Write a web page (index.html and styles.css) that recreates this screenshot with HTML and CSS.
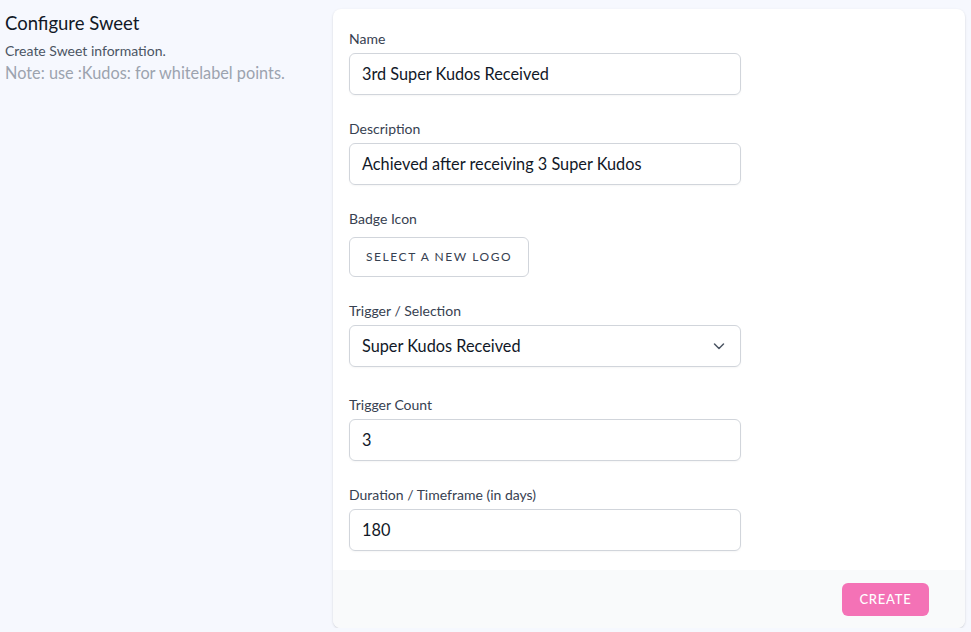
FILE: index.html
```html
<!DOCTYPE html>
<html lang="en">
<head>
<meta charset="utf-8">
<title>Configure Sweet</title>
<link rel="stylesheet" href="styles.css">
</head>
<body>
<div class="page">
  <div class="intro">
    <h3 class="intro-title">Configure Sweet</h3>
    <p class="intro-text">Create Sweet information.</p>
    <p class="intro-note">Note: use :Kudos: for whitelabel points.</p>
  </div>
  <form class="card">
    <div class="card-body">
      <div class="field">
        <label class="label">Name</label>
        <div class="input">3rd Super Kudos Received</div>
      </div>
      <div class="field">
        <label class="label">Description</label>
        <div class="input">Achieved after receiving 3 Super Kudos</div>
      </div>
      <div class="field">
        <label class="label">Badge Icon</label>
        <div class="logo-row"><span class="btn-outline">Select a new logo</span></div>
      </div>
      <div class="field field-select">
        <label class="label">Trigger / Selection</label>
        <div class="input select">
          <span>Super Kudos Received</span>
          <svg class="chevron" width="20" height="20" viewBox="0 0 20 20" fill="none"><path d="M5.5 8l4.5 4.5 4.5-4.5" stroke="#4b5563" stroke-width="1.5" stroke-linecap="round" stroke-linejoin="round"/></svg>
        </div>
      </div>
      <div class="field">
        <label class="label">Trigger Count</label>
        <div class="input">3</div>
      </div>
      <div class="field">
        <label class="label">Duration / Timeframe (in days)</label>
        <div class="input">180</div>
      </div>
    </div>
    <div class="card-footer">
      <span class="btn-primary">Create</span>
    </div>
  </form>
</div>
</body>
</html>
```

FILE: styles.css
```css
* { box-sizing: border-box; }
html, body { margin: 0; padding: 0; }
body {
  background: #f6f8fe;
  font-family: Lato, "Noto Sans", Arial, sans-serif;
  color: #111827;
}
.page {
  display: grid;
  grid-template-columns: 304px 632px;
  column-gap: 24px;
  padding: 9px 6px 0 5px;
}
.intro-title {
  margin: 0;
  font-size: 18.5px;
  line-height: 28px;
  font-weight: 400;
  color: #111827;
}
.intro-text {
  margin: 4px 0 0;
  font-size: 14px;
  line-height: 20px;
  color: #4b5563;
}
.intro-note {
  margin: 0;
  font-size: 16.3px;
  line-height: 24px;
  color: #9ca3af;
}
.card {
  background: #fff;
  border-radius: 8px;
  box-shadow: 0 1px 3px rgba(0,0,0,0.10), 0 1px 2px rgba(0,0,0,0.06);
  overflow: hidden;
}
.card-body {
  padding: 20px 16px 19px;
  display: flex;
  flex-direction: column;
  gap: 24px;
}
.field { width: 392px; display: flex; flex-direction: column; }
.field-select { margin-bottom: 4px; }
.label {
  font-size: 14px;
  line-height: 20px;
  color: #374151;
}
.input {
  margin-top: 4px;
  height: 42px;
  border: 1px solid #d1d5db;
  border-radius: 6px;
  padding: 0 12px;
  font-size: 16.3px;
  line-height: 40px;
  color: #111827;
  box-shadow: 0 1px 2px rgba(0,0,0,0.04);
}
.select {
  display: flex;
  align-items: center;
  justify-content: space-between;
  padding-right: 11px;
}
.chevron { display: block; }
.logo-row { margin-top: 8px; display: flex; }
.btn-outline {
  height: 40px;
  padding: 0 16px;
  border: 1px solid #d1d5db;
  border-radius: 6px;
  font-size: 12px;
  line-height: 38px;
  letter-spacing: 0.13em;
  text-transform: uppercase;
  color: #374151;
  background: #fff;
}
.card-footer {
  background: #f9fafb;
  padding: 13px 36px 12px 16px;
  display: flex;
  justify-content: flex-end;
}
.btn-primary {
  height: 33px;
  width: 87px;
  background: #f472b6;
  color: #fff;
  border-radius: 6px;
  font-size: 13px;
  line-height: 33px;
  text-align: center;
  letter-spacing: 0.06em;
  text-transform: uppercase;
  font-weight: 500;
}
```
